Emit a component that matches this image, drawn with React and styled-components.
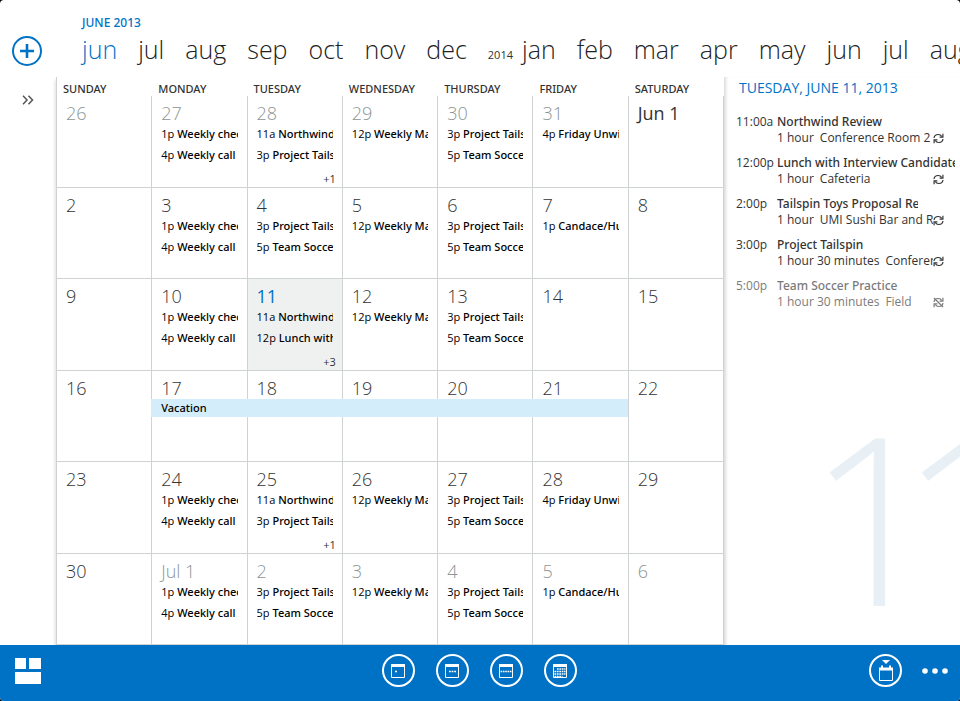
import React, { useState } from "react";
import styled, { createGlobalStyle } from "styled-components";

const days = ["Sunday", "Monday", "Tuesday", "Wednesday", "Thursday", "Friday", "Saturday"];

const months = [
  "jun", "jul", "aug", "sep", "oct", "nov", "dec", "2014",
  "jan", "feb", "mar", "apr", "may", "jun", "jul", "aug",
];

const monday = [["1p", "Weekly checkpoint"], ["4p", "Weekly call"]];
const tuesday = [["3p", "Project Tailspin"], ["5p", "Team Soccer Practice"]];
const tuesdayNorthwind = [["11a", "Northwind Review"], ["3p", "Project Tailspin"]];
const wednesday = [["12p", "Weekly Marketing"]];
const fridayUnwind = [["4p", "Friday Unwind"]];
const fridayCandace = [["1p", "Candace/Hugo"]];

const weeks = [
  [
    { label: "26", muted: true },
    { label: "27", muted: true, events: monday },
    { label: "28", muted: true, events: tuesdayNorthwind, more: 1 },
    { label: "29", muted: true, events: wednesday },
    { label: "30", muted: true, events: tuesday },
    { label: "31", muted: true, events: fridayUnwind },
    { label: "Jun 1" },
  ],
  [
    { label: "2" },
    { label: "3", events: monday },
    { label: "4", events: tuesday },
    { label: "5", events: wednesday },
    { label: "6", events: tuesday },
    { label: "7", events: fridayCandace },
    { label: "8" },
  ],
  [
    { label: "9" },
    { label: "10", events: monday },
    { label: "11", today: true, events: [["11a", "Northwind Review"], ["12p", "Lunch with Interview Candidate"]], more: 3 },
    { label: "12", events: wednesday },
    { label: "13", events: tuesday },
    { label: "14" },
    { label: "15" },
  ],
  [
    { label: "16" },
    { label: "17", banner: { title: "Vacation", span: 5 } },
    { label: "18" },
    { label: "19" },
    { label: "20" },
    { label: "21" },
    { label: "22" },
  ],
  [
    { label: "23" },
    { label: "24", events: monday },
    { label: "25", events: tuesdayNorthwind, more: 1 },
    { label: "26", events: wednesday },
    { label: "27", events: tuesday },
    { label: "28", events: fridayUnwind },
    { label: "29" },
  ],
  [
    { label: "30" },
    { label: "Jul 1", muted: true, events: monday },
    { label: "2", muted: true, events: tuesday },
    { label: "3", muted: true, events: wednesday },
    { label: "4", muted: true, events: tuesday },
    { label: "5", muted: true, events: fridayCandace },
    { label: "6", muted: true },
  ],
];

const agenda = [
  { time: "11:00a", title: "Northwind Review", length: "1 hour", place: "Conference Room 2" },
  { time: "12:00p", title: "Lunch with Interview Candidate", length: "1 hour", place: "Cafeteria" },
  { time: "2:00p", title: "Tailspin Toys Proposal Review", length: "1 hour", place: "UMI Sushi Bar and Restaurant", flagged: true },
  { time: "3:00p", title: "Project Tailspin", length: "1 hour 30 minutes", place: "Conference Room 1" },
  { time: "5:00p", title: "Team Soccer Practice", length: "1 hour 30 minutes", place: "Field", faded: true },
];

function RecurIcon({ changed }) {
  return (
    <svg width="11" height="11" viewBox="0 0 11 11" fill="none" stroke="currentColor" strokeWidth="1.2">
      <path d="M1 5C1.3 2.8 3 1.5 5.2 1.5c1.6 0 2.8.7 3.6 2" />
      <path d="M9.9 .8v3.4H6.6" />
      <path d="M10 6c-.3 2.2-2 3.5-4.2 3.5-1.6 0-2.8-.7-3.6-2" />
      <path d="M1.1 10.2V6.8h3.3" />
      {changed && <path d="M1 1l9 9" />}
    </svg>
  );
}

function ViewIcon({ view }) {
  return (
    <svg width="16" height="16" viewBox="0 0 16 16" fill="none" stroke="#fff">
      <path d="M1.5 2.5h13v12h-13z" />
      <path d="M1 2.5h14" strokeWidth="3" />
      {view === "Day" && <path d="M5 8.5h2" strokeWidth="1.6" />}
      {view === "Work week" && <path d="M5 8.5h7" strokeWidth="1.6" strokeDasharray="1.8 .8" />}
      {view === "Week" && <path d="M2.6 8.5h11" strokeWidth="1.6" strokeDasharray="1.6 .7" />}
      {view === "Month" && (
        <path d="M5 6h8.5M2.5 8.5h11M2.5 11h11M2.5 13.5h8" strokeWidth="1.7" strokeDasharray="1.7 .7" />
      )}
    </svg>
  );
}

function App() {
  const [month, setMonth] = useState(0);
  const [view, setView] = useState("Month");

  return (
    <StScreen>
      <GlobalStyle />
      <StTop>
        <StRail>
          <StNewBtn type="button" aria-label="New event">
            <svg width="30" height="30" viewBox="0 0 30 30" fill="none" stroke="#0072c6">
              <circle cx="15" cy="15" r="14" strokeWidth="2" />
              <path d="M15 8v14M8 15h14" strokeWidth="2.6" />
            </svg>
          </StNewBtn>
          <StExpandBtn type="button" aria-label="Show calendars">
            <svg width="12" height="10" viewBox="0 0 12 10" fill="none" stroke="#555" strokeWidth="1.5">
              <path d="M1 .8l4 4.2-4 4.2M6.5 .8l4 4.2-4 4.2" />
            </svg>
          </StExpandBtn>
        </StRail>
        <StMain>
          <StHeader>
            <StTitle>JUNE 2013</StTitle>
            <StMonths>
              {months.map((name, i) =>
                name === "2014" ? (
                  <StYear key={i}>{name}</StYear>
                ) : (
                  <StMonthBtn key={i} type="button" $active={month === i} onClick={() => setMonth(i)}>
                    {name}
                  </StMonthBtn>
                )
              )}
            </StMonths>
          </StHeader>
          <StContent>
            <StTable>
              <StThead>
                <StTr>
                  {days.map((day) => (
                    <StTh key={day} scope="col">{day}</StTh>
                  ))}
                </StTr>
              </StThead>
              <StTbody>
                {weeks.map((week, i) => (
                  <StTr key={i}>
                    {week.map((day) => (
                      <StTd key={day.label} $today={day.today}>
                        <StDate $muted={day.muted} $today={day.today} $named={day.label === "Jun 1"}>
                          {day.label}
                        </StDate>
                        {day.banner && (
                          <StBanner type="button" $span={day.banner.span}>{day.banner.title}</StBanner>
                        )}
                        {day.events?.map(([time, title]) => (
                          <StEvent key={title} type="button">
                            <StEventTime>{time}</StEventTime> {title}
                          </StEvent>
                        ))}
                        {day.more && <StMore>+{day.more}</StMore>}
                      </StTd>
                    ))}
                  </StTr>
                ))}
              </StTbody>
            </StTable>
            <StAgenda>
              <StAgendaTitle>TUESDAY, JUNE 11, 2013</StAgendaTitle>
              <StAgendaList>
                {agenda.map((item) => (
                  <StAgendaItem key={item.time} $faded={item.faded}>
                    <time>{item.time}</time>
                    <StAgendaBody>
                      <StAgendaName $flagged={item.flagged}>{item.title}</StAgendaName>
                      <StAgendaInfo>
                        <StPlace>
                          <StLength>{item.length}</StLength>
                          {item.place}
                        </StPlace>
                        <RecurIcon changed={item.faded} />
                      </StAgendaInfo>
                    </StAgendaBody>
                  </StAgendaItem>
                ))}
              </StAgendaList>
              <StBigDate>11</StBigDate>
            </StAgenda>
          </StContent>
        </StMain>
      </StTop>
      <StBar>
        <StAppsBtn type="button" aria-label="Apps">
          <svg width="26" height="26" viewBox="0 0 26 26" fill="#fff">
            <path d="M0 0h11v11H0zM14 0h12v11H14zM0 14h26v12H0z" />
          </svg>
        </StAppsBtn>
        <StViews>
          {["Day", "Work week", "Week", "Month"].map((name) => (
            <StRoundBtn key={name} type="button" aria-label={name} aria-pressed={view === name} onClick={() => setView(name)}>
              <ViewIcon view={name} />
            </StRoundBtn>
          ))}
        </StViews>
        <StBarEnd>
          <StRoundBtn type="button" aria-label="Go to today">
            <svg width="16" height="24" viewBox="0 0 16 24" fill="none" stroke="#fff">
              <path d="M4 1h8l-4 4z" fill="#fff" stroke="none" />
              <path d="M1.5 9.5h13v12h-13z" />
              <path d="M1 10h14" strokeWidth="3" />
              <path d="M4 6.5v3M12 6.5v3" strokeWidth="2" />
            </svg>
          </StRoundBtn>
          <button type="button" aria-label="More">
            <svg width="26" height="6" viewBox="0 0 26 6" fill="#fff">
              <circle cx="3" cy="3" r="2.8" />
              <circle cx="13" cy="3" r="2.8" />
              <circle cx="23" cy="3" r="2.8" />
            </svg>
          </button>
        </StBarEnd>
      </StBar>
    </StScreen>
  );
}

const GlobalStyle = createGlobalStyle`
  * {
    box-sizing: border-box;
  }
  body {
    margin: 0;
    background: #000;
    font-family: "Open Sans", "Noto Sans", sans-serif;
    color: #333;
  }
  button {
    padding: 0;
    border: 0;
    background: none;
    font: inherit;
    color: inherit;
    cursor: pointer;
  }
  svg {
    display: block;
    flex: none;
  }
`;

const StScreen = styled.div`
  height: 100vh;
  display: flex;
  flex-direction: column;
  background: #fff;
  border-radius: 4px;
  overflow: hidden;
`;
const StTop = styled.div`
  flex: 1;
  min-height: 0;
  display: flex;
`;
const StRail = styled.div`
  flex: none;
  width: 56px;
  padding: 36px 0 0 12px;
  display: flex;
  flex-direction: column;
  align-items: flex-start;
  gap: 29px;
`;
const StNewBtn = styled.button`
  border-radius: 50%;
`;
const StExpandBtn = styled.button`
  margin-left: 10px;
`;
const StMain = styled.div`
  flex: 1;
  min-width: 0;
  display: flex;
  flex-direction: column;
`;
const StHeader = styled.header`
  flex: none;
  height: 77px;
  padding: 14px 0 0 26px;
  overflow: hidden;
`;
const StTitle = styled.h1`
  margin: 0;
  font-family: "Noto Sans", sans-serif;
  font-size: 12px;
  font-weight: 500;
  line-height: 18px;
  color: #0072c6;
`;
const StMonths = styled.nav`
  display: flex;
  align-items: baseline;
  gap: 21px;
`;
const StMonthBtn = styled.button`
  flex: none;
  font-size: 25px;
  font-weight: 300;
  line-height: 34px;
  color: ${({ $active }) => ($active ? "#0072c6" : "#222")};
`;
const StYear = styled.span`
  margin-right: -12px;
  font-size: 11px;
`;
const StContent = styled.div`
  flex: 1;
  min-height: 0;
  display: grid;
  grid-template-columns: 668fr 236fr;
`;
const StTable = styled.table`
  min-width: 0;
  display: grid;
  grid-template-rows: auto 1fr;
  border-left: 1px solid #cfd3d3;
  box-shadow: -1px 3px 3px #ddd;
`;
const StThead = styled.thead`
  display: grid;
`;
const StTbody = styled.tbody`
  display: grid;
  grid-auto-rows: 1fr;
`;
const StTr = styled.tr`
  display: grid;
  grid-template-columns: repeat(7, 1fr);
`;
const StTh = styled.th`
  padding: 4px 0 0 6px;
  text-align: left;
  text-transform: uppercase;
  font-family: "Noto Sans", sans-serif;
  font-size: 11px;
  font-weight: 500;
  line-height: 15px;
`;
const StTd = styled.td`
  position: relative;
  min-width: 0;
  padding: 6px 9px 0;
  border-right: 1px solid #cfd3d3;
  border-bottom: 1px solid #cfd3d3;
  background: ${({ $today }) => ($today ? "#eff1f1" : "transparent")};
`;
const StDate = styled.div`
  font-size: 18px;
  font-weight: ${({ $named, $today }) => ($named || $today ? 400 : 300)};
  line-height: 22px;
  color: ${({ $muted, $today }) => ($today ? "#0072c6" : $muted ? "#8c9696" : "#333")};
`;
const StEvent = styled.button`
  display: block;
  width: 100%;
  margin-bottom: 1px;
  overflow: hidden;
  white-space: nowrap;
  text-align: left;
  font-family: "Noto Sans", sans-serif;
  font-size: 11px;
  font-weight: 500;
  line-height: 20px;
  color: #000;
`;
const StEventTime = styled.span`
  font-family: "Open Sans", sans-serif;
  font-weight: 400;
`;
const StMore = styled.div`
  margin: 7px -3px 0 0;
  text-align: right;
  font-size: 11px;
  line-height: 14px;
`;
const StBanner = styled.button`
  position: absolute;
  z-index: 1;
  top: 28px;
  left: -1px;
  width: calc(${({ $span }) => $span} * (100% + 1px));
  height: 18px;
  padding-left: 10px;
  text-align: left;
  font-family: "Noto Sans", sans-serif;
  font-size: 11px;
  font-weight: 500;
  line-height: 18px;
  color: #000;
  background: #d3eefa;
`;
const StAgenda = styled.aside`
  position: relative;
  min-width: 0;
  padding: 0 5px 0 12px;
  overflow: hidden;
  box-shadow: inset 4px 0 4px -3px #ccc;
`;
const StAgendaTitle = styled.h2`
  margin: 0 0 16px 3px;
  white-space: nowrap;
  font-size: 14px;
  font-weight: 400;
  line-height: 21px;
  color: #0072c6;
`;
const StAgendaList = styled.ul`
  margin: 0;
  padding: 0;
  list-style: none;
  display: flex;
  flex-direction: column;
  gap: 9px;
`;
const StAgendaItem = styled.li`
  display: flex;
  font-size: 12px;
  line-height: 16px;
  opacity: ${({ $faded }) => ($faded ? 0.65 : 1)};

  time {
    flex: 0 0 41px;
  }
`;
const StAgendaBody = styled.div`
  flex: 1;
  min-width: 0;
`;
const StAgendaName = styled.div`
  margin-right: ${({ $flagged }) => ($flagged ? "37px" : "0")};
  overflow: hidden;
  white-space: nowrap;
  font-family: "Noto Sans", sans-serif;
  font-weight: 500;
`;
const StAgendaInfo = styled.div`
  display: flex;
  align-items: center;
  justify-content: space-between;
  padding-right: 11px;
`;
const StPlace = styled.div`
  min-width: 0;
  overflow: hidden;
  white-space: nowrap;
`;
const StLength = styled.span`
  margin-right: 6px;
`;
const StBigDate = styled.div`
  position: absolute;
  left: 100px;
  bottom: 10px;
  font-size: 235px;
  font-weight: 300;
  font-variant-numeric: proportional-nums;
  line-height: 240px;
  color: #e8f0f6;
  pointer-events: none;
`;
const StBar = styled.footer`
  flex: none;
  height: 56px;
  padding: 0 12px 5px 10px;
  display: grid;
  grid-template-columns: 1fr auto 1fr;
  align-items: center;
  background: #0072c6;
`;
const StAppsBtn = styled.button`
  justify-self: start;
  margin-left: 5px;
`;
const StViews = styled.div`
  display: flex;
  gap: 21px;
`;
const StBarEnd = styled.div`
  display: flex;
  align-items: center;
  justify-content: flex-end;
  gap: 20px;
`;
const StRoundBtn = styled.button`
  width: 33px;
  height: 33px;
  display: flex;
  align-items: center;
  justify-content: center;
  border: 2px solid #fff;
  border-radius: 50%;
`;

export default App;
